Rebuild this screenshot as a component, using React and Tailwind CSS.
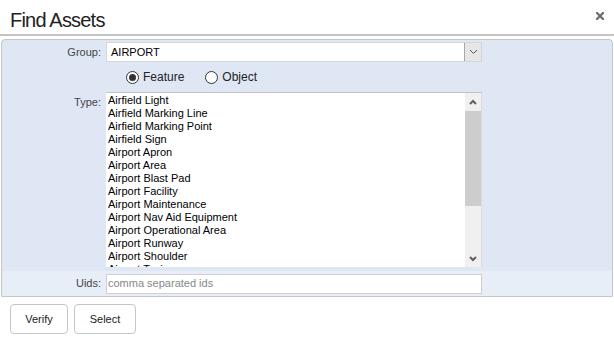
import React from "react";

const types = [
  "Airfield Light",
  "Airfield Marking Line",
  "Airfield Marking Point",
  "Airfield Sign",
  "Airport Apron",
  "Airport Area",
  "Airport Blast Pad",
  "Airport Facility",
  "Airport Maintenance",
  "Airport Nav Aid Equipment",
  "Airport Operational Area",
  "Airport Runway",
  "Airport Shoulder",
  "Airport Taxiway",
];

function Radio({ checked, label }) {
  return (
    <div className="flex items-center gap-[4px]">
      <div className="w-[13px] h-[13px] rounded-full border border-[#333] bg-white flex items-center justify-center">
        {checked && <div className="w-[7px] h-[7px] rounded-full bg-[#333]" />}
      </div>
      <span className="text-[12px] leading-[14px] text-[#222]">{label}</span>
    </div>
  );
}

export default function App() {
  return (
    <div
      className="w-[614px] h-[342px] bg-white overflow-hidden"
      style={{ fontFamily: '"Liberation Sans", Arial, sans-serif' }}
    >
      <div className="h-[34px] flex items-start justify-between pl-[10px] pr-[10px]">
        <div className="pt-[8px] text-[20px] leading-[24px] tracking-[-0.8px] text-[#222]">
          Find Assets
        </div>
        <svg width="8" height="8" viewBox="0 0 8 8" className="mt-[12px]">
          <path d="M1 1L7 7M7 1L1 7" stroke="#6b6b6b" strokeWidth="2.2" strokeLinecap="square" />
        </svg>
      </div>
      <div className="h-[2px] bg-[#c4c4c4]" />
      <div className="mt-[3px] mx-[1px] border border-[#c6c6c6] rounded-t-[4px] bg-[#dfe7f5] text-[11px]">
        <div className="pt-[2px] px-[1px]">
          <div className="flex items-center gap-[5px] h-[20px]">
            <div className="w-[98px] text-right text-[#444] leading-[13px]">Group:</div>
            <div className="w-[376px] h-[20px] bg-white border border-[#d6d6d6] flex items-stretch">
              <div className="flex-1 pl-[4px] flex items-center text-black">AIRPORT</div>
              <div className="w-[17px] bg-[#e6e6e6] border-l border-[#a8a8a8] flex items-center justify-center">
                <svg width="9" height="6" viewBox="0 0 9 6">
                  <path d="M1 1L4.5 4.5L8 1" stroke="#555" strokeWidth="1" fill="none" />
                </svg>
              </div>
            </div>
          </div>
          <div className="h-[30px] flex items-center gap-[21px] pl-[123px]">
            <Radio checked label="Feature" />
            <Radio label="Object" />
          </div>
          <div className="flex gap-[5px] items-start">
            <div className="w-[98px] text-right text-[#444] leading-[13px] pt-[4px]">Type:</div>
            <div className="w-[376px] h-[175px] bg-white border-t border-[#c3c3c3] flex">
              <div className="flex-1 h-[174px] overflow-hidden pt-[1px] pl-[2px]">
                {types.map((t) => (
                  <div key={t} className="leading-[13px] h-[13px] text-black whitespace-nowrap">
                    {t}
                  </div>
                ))}
              </div>
              <div className="w-[16px] bg-[#f0f0f0] flex flex-col">
                <div className="h-[18px] flex items-center justify-center">
                  <svg width="8" height="6" viewBox="0 0 8 6">
                    <path d="M1 5L4 2L7 5" stroke="#606060" strokeWidth="2" fill="none" />
                  </svg>
                </div>
                <div className="h-[95px] bg-[#cdcdcd]" />
                <div className="flex-1" />
                <div className="h-[17px] flex items-center justify-center">
                  <svg width="8" height="6" viewBox="0 0 8 6">
                    <path d="M1 1L4 4L7 1" stroke="#606060" strokeWidth="2" fill="none" />
                  </svg>
                </div>
              </div>
              <div className="w-[1px] bg-[#dcdcdc]" />
            </div>
          </div>
          <div className="h-[4px]" />
        </div>
        <div className="bg-[#e8eef8] h-[25px] flex items-center gap-[5px] px-[1px]">
          <div className="w-[98px] text-right text-[#444] leading-[13px]">Uids:</div>
          <div className="w-[376px] h-[20px] bg-white border border-[#cfcfcf] flex items-center pl-[1px] text-[#888] text-[11px]">
            comma separated ids
          </div>
        </div>
      </div>
      <div className="flex gap-[6px] pl-[10px] mt-[7px]">
        <button className="w-[58px] h-[30px] bg-white border border-[#c6c6c6] rounded-[4px] text-[11px] text-[#222]">
          Verify
        </button>
        <button className="w-[62px] h-[30px] bg-white border border-[#c6c6c6] rounded-[4px] text-[11px] text-[#222]">
          Select
        </button>
      </div>
    </div>
  );
}
